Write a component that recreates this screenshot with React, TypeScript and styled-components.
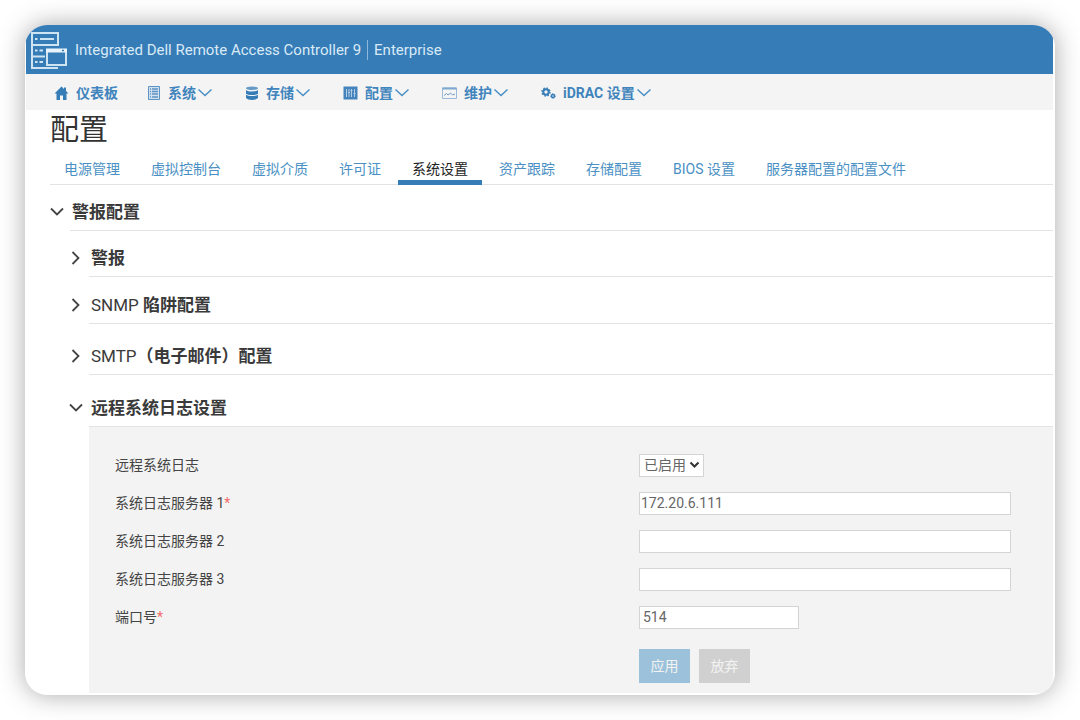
import React from "react";
import styled, { createGlobalStyle, css } from "styled-components";

const Global = createGlobalStyle`
  *, *::before, *::after { box-sizing: border-box; }
  body {
    margin: 0;
    background: #fff;
    color: #333;
    font-family: Roboto, "Noto Sans CJK SC", sans-serif;
    font-size: 14px;
    line-height: 20px;
  }
  button, input, select { font: inherit; }
`;

const Page = styled.div`
  min-height: 100vh;
  padding: 25px;
  display: flex;
  overflow: hidden;
`;

const Card = styled.div`
  flex: 1;
  min-width: 0;
  display: flex;
  flex-direction: column;
  padding: 0 2px 2px 1px;
  background: #fff;
  border-radius: 22px;
  overflow: hidden;
  box-shadow: 0 0 26px rgba(0, 0, 0, 0.34);
`;

const Header = styled.header`
  height: 49px;
  display: flex;
  align-items: center;
  gap: 7px;
  padding-left: 4px;
  background: #367cb7;
  color: #d9eaf6;
  font-size: 15px;
`;

const Brand = styled.span`
  padding-right: 6px;
  border-right: 1px solid #8fb9dc;
`;

const Edition = styled.span`
  padding-left: 6px;
`;

const Titles = styled.div`
  display: flex;
  white-space: nowrap;
`;

const Nav = styled.nav`
  height: 36px;
  display: flex;
  align-items: center;
  gap: 29px;
  padding: 2px 0 0 28px;
  background: #f4f4f4;
`;

const NavButton = styled.button`
  display: flex;
  align-items: center;
  padding: 0;
  border: 0;
  background: none;
  color: #3f84bc;
  font-weight: 700;
  white-space: nowrap;
`;

const NavLabel = styled.span`
  padding-left: 7px;
`;

const NavArrow = styled.svg`
  margin-right: 4px;
`;

const Main = styled.main`
  flex: 1;
  display: flex;
  flex-direction: column;
  padding-left: 24px;
`;

const Title = styled.h1`
  margin: 0;
  font-size: 29px;
  font-weight: 400;
  line-height: 40px;
`;

const Tabs = styled.div`
  height: 35px;
  display: flex;
  gap: 3px;
  border-bottom: 1px solid #e3e3e3;
`;

const Tab = styled.a<{ $active?: boolean }>`
  padding: 9px 14px 0;
  height: 35px;
  color: #4a90c4;
  text-decoration: none;
  white-space: nowrap;
  ${(p) =>
    p.$active &&
    css`
      color: #222;
      border-bottom: 5px solid #367cb7;
    `}
`;

const SectionButton = styled.button<{ $height: number }>`
  display: flex;
  align-items: flex-end;
  gap: 8px;
  width: 100%;
  height: ${(p) => p.$height}px;
  padding: 0 0 8px;
  border: 0;
  background: none;
  color: #3a3a3a;
  font-size: 17px;
  font-weight: 700;
  text-align: left;
`;

const SectionArrow = styled.svg`
  height: 20px;
`;

const Latin = styled.span`
  font-weight: 400;
`;

const Rule = styled.div`
  height: 1px;
  margin-left: 20px;
  background: #e3e3e3;
`;

const SubSections = styled.div`
  flex: 1;
  display: flex;
  flex-direction: column;
  padding-left: 19px;
`;

const Form = styled.form`
  flex: 1;
  margin-left: 20px;
  padding: 19px 42px 10px 26px;
  background: #f3f3f3;
`;

const Row = styled.div`
  display: grid;
  grid-template-columns: 524px 1fr;
  align-items: center;
  height: 38px;
`;

const Label = styled.label`
  color: #444;
`;

const Required = styled.span`
  color: #f26a6a;
`;

const field = css`
  height: 23px;
  border: 1px solid #d4d4d4;
  border-radius: 0;
  background: #fff;
  color: #666;
`;

const TextInput = styled.input<{ $short?: boolean }>`
  ${field}
  width: ${(p) => (p.$short ? "160px" : "100%")};
  padding: 0 ${(p) => (p.$short ? 3 : 1)}px;
`;

const SelectWrap = styled.div`
  display: grid;
  width: 65px;
  align-items: center;
`;

const Select = styled.select`
  ${field}
  grid-area: 1 / 1;
  appearance: none;
  padding: 0 4px;
`;

const SelectArrow = styled.svg`
  grid-area: 1 / 1;
  justify-self: end;
  margin-right: 4px;
  pointer-events: none;
`;

const Actions = styled.div`
  display: flex;
  gap: 9px;
  padding: 13px 0 0 524px;
`;

const ActionButton = styled.button<{ $primary?: boolean }>`
  width: 51px;
  height: 34px;
  padding: 0;
  border: 0;
  background: ${(p) => (p.$primary ? "#9bc2da" : "#d0d0d0")};
  color: #f3f3f3;
`;

const Logo = () => (
  <svg width="38" height="40" viewBox="0 0 38 40" fill="none" stroke="#cfe4f3" strokeWidth="2">
    <path d="M2 3H28V15H2ZM2 15V38H28M2 26.500H15" />
    <path d="M5 9H7.500M10 9H24M5 20.500H7.500M9.500 20.500H13M5 32H7.500M9.500 32H13" />
    <path d="M17 20H36V35H17Z" />
    <path d="M16 20.500H37" stroke="#e8f3fb" strokeWidth="4" />
    <path d="M32 20.500H34" stroke="#367cb7" strokeWidth="1.500" />
  </svg>
);

const HomeIcon = () => (
  <svg width="15" height="15" viewBox="0 0 15 15" fill="#367cb7">
    <path d="M7.500 0.500L0.500 7.500H2.500V14H6V9.500H9V14H12.500V7.500H14.500L12 5V1.500H10V3Z" />
  </svg>
);

const SystemIcon = () => (
  <svg width="14" height="15" viewBox="0 0 14 15" fill="none" stroke="#5c94c6">
    <path d="M1.500 0.500H12.500V13.500H1.500Z" fill="#d3e1ef" />
    <path d="M5 3H11M5 5.500H11M5 8H11M5 11H11" strokeWidth="1.400" />
    <path d="M3 3H4M3 5.500H4M3 8H4M3 11H4" strokeWidth="1.400" />
  </svg>
);

const StorageIcon = () => (
  <svg width="14" height="15" viewBox="0 0 14 15" fill="#367cb7">
    <ellipse cx="7" cy="2.200" rx="6" ry="1.700" opacity="0.75" />
    <path d="M1 4C3 6 11 6 13 4V7.800C11 9.500 3 9.500 1 7.800Z" />
    <path d="M1 8.800C3 10.500 11 10.500 13 8.800V12C11 14.500 3 14.500 1 12Z" />
  </svg>
);

const ConfigIcon = () => (
  <svg width="15" height="15" viewBox="0 0 15 15">
    <rect x="0.500" y="0.500" width="14" height="13" fill="#4483bb" />
    <path
      d="M3.500 3V11M6 3V11M8.500 3V11M11.500 3V11M5 6.500H7M7.500 4.500H9.500M10.500 7.500H12.500"
      stroke="#b4cee5"
      fill="none"
    />
  </svg>
);

const MaintenanceIcon = () => (
  <svg width="15" height="13" viewBox="0 0 15 13" fill="none" stroke="#9bb9d8">
    <path d="M0.500 1H14.500V11.500H0.500Z" />
    <path d="M0.500 1.500H14.500" stroke="#7fa8d0" strokeWidth="2" />
    <path d="M2 8.500L4.500 6.500L6 8L8.500 6L10.500 8L13 7" stroke="#6f9dca" />
  </svg>
);

const GearsIcon = () => (
  <svg width="15" height="13" viewBox="0 0 15 13" fill="none" stroke="#367cb7">
    <circle cx="5" cy="5" r="2.700" strokeWidth="2" />
    <circle cx="5" cy="5" r="4" strokeWidth="1.400" strokeDasharray="1.570 1.570" />
    <circle cx="12" cy="9" r="1.500" strokeWidth="1.400" />
    <circle cx="12" cy="9" r="2.300" strokeDasharray="0.900 0.900" />
  </svg>
);

const NavChevron = () => (
  <NavArrow width="16" height="10" viewBox="0 0 16 10" fill="none" stroke="#4a8fc5" strokeWidth="1.500">
    <path d="M2.500 1.500L9 7.500L15.500 1.500" />
  </NavArrow>
);

const SectionChevron = ({ open }: { open?: boolean }) => (
  <SectionArrow width="14" viewBox="0 0 14 20" fill="none" stroke="#444" strokeWidth="1.800">
    <path d={open ? "M1 6.500L7 12.500L13 6.500" : "M3.500 4L9.500 10L3.500 16"} />
  </SectionArrow>
);

const navItems = [
  { label: "仪表板", icon: HomeIcon },
  { label: "系统", icon: SystemIcon, menu: true },
  { label: "存储", icon: StorageIcon, menu: true },
  { label: "配置", icon: ConfigIcon, menu: true },
  { label: "维护", icon: MaintenanceIcon, menu: true },
  { label: "iDRAC 设置", icon: GearsIcon, menu: true },
];

const tabs = [
  "电源管理",
  "虚拟控制台",
  "虚拟介质",
  "许可证",
  "系统设置",
  "资产跟踪",
  "存储配置",
  "BIOS 设置",
  "服务器配置的配置文件",
];

type SectionProps = { height: number; open?: boolean; children: React.ReactNode };

const Section = ({ height, open, children }: SectionProps) => (
  <>
    <SectionButton type="button" $height={height} aria-expanded={!!open}>
      <SectionChevron open={open} />
      <span>{children}</span>
    </SectionButton>
    <Rule />
  </>
);

const servers = [
  { id: "server1", label: "系统日志服务器 1", value: "172.20.6.111", required: true },
  { id: "server2", label: "系统日志服务器 2", value: "" },
  { id: "server3", label: "系统日志服务器 3", value: "" },
];

export default function App() {
  return (
    <Page>
      <Global />
      <Card>
        <Header>
          <Logo />
          <Titles>
            <Brand>Integrated Dell Remote Access Controller 9</Brand>
            <Edition>Enterprise</Edition>
          </Titles>
        </Header>
        <Nav>
          {navItems.map(({ label, icon: Icon, menu }) => (
            <NavButton type="button" key={label}>
              <Icon />
              <NavLabel>{label}</NavLabel>
              {menu && <NavChevron />}
            </NavButton>
          ))}
        </Nav>
        <Main>
          <Title>配置</Title>
          <Tabs>
            {tabs.map((tab) => (
              <Tab href="#" key={tab} $active={tab === "系统设置"}>
                {tab}
              </Tab>
            ))}
          </Tabs>
          <Section height={45} open>
            警报配置
          </Section>
          <SubSections>
            <Section height={45}>警报</Section>
            <Section height={46}>
              <Latin>SNMP</Latin> 陷阱配置
            </Section>
            <Section height={50}>
              <Latin>SMTP</Latin>（电子邮件）配置
            </Section>
            <Section height={51} open>
              远程系统日志设置
            </Section>
            <Form onSubmit={(e) => e.preventDefault()}>
              <Row>
                <Label htmlFor="remote">远程系统日志</Label>
                <SelectWrap>
                  <Select id="remote" defaultValue="on">
                    <option value="on">已启用</option>
                    <option value="off">已禁用</option>
                  </Select>
                  <SelectArrow width="11" height="8" viewBox="0 0 11 8" fill="none" stroke="#333" strokeWidth="2">
                    <path d="M1.500 1.500L5.500 5.500L9.500 1.500" />
                  </SelectArrow>
                </SelectWrap>
              </Row>
              {servers.map((s) => (
                <Row key={s.id}>
                  <Label htmlFor={s.id}>
                    {s.label}
                    {s.required && <Required>*</Required>}
                  </Label>
                  <TextInput id={s.id} type="text" defaultValue={s.value} />
                </Row>
              ))}
              <Row>
                <Label htmlFor="port">
                  端口号<Required>*</Required>
                </Label>
                <TextInput id="port" type="text" defaultValue="514" $short />
              </Row>
              <Actions>
                <ActionButton type="submit" $primary>
                  应用
                </ActionButton>
                <ActionButton type="button">放弃</ActionButton>
              </Actions>
            </Form>
          </SubSections>
        </Main>
      </Card>
    </Page>
  );
}
